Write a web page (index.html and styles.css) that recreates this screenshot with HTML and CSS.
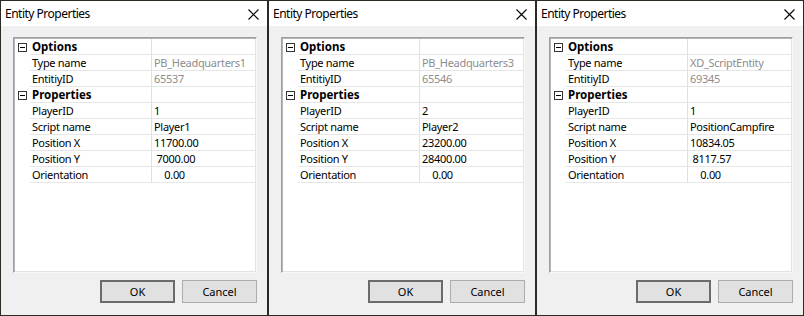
FILE: index.html
```html
<!DOCTYPE html>
<html lang="en">
<head>
    <meta charset="UTF-8">
    <title>Entity Properties</title>
    <link rel="stylesheet" href="styles.css">
</head>
<body>
    <div class="desktop">
        <div class="dialog">
            <div class="titlebar">
                <span class="title">Entity Properties</span>
                <svg class="close" width="11" height="11" viewBox="0 0 11 11"><path d="M0.5 0.5 L10.5 10.5 M10.5 0.5 L0.5 10.5" stroke="#000" stroke-width="1.1"/></svg>
            </div>
            <div class="body">
                <div class="grid">
                    <div class="row cat"><div class="gutter"><span class="minus"></span></div><div class="name">Options</div><div class="value"></div></div>
                    <div class="row"><div class="gutter"></div><div class="name">Type name</div><div class="value ro">PB_Headquarters1</div></div>
                    <div class="row"><div class="gutter"></div><div class="name">EntitiyID</div><div class="value ro">65537</div></div>
                    <div class="row cat"><div class="gutter"><span class="minus"></span></div><div class="name">Properties</div><div class="value"></div></div>
                    <div class="row"><div class="gutter"></div><div class="name">PlayerID</div><div class="value">1</div></div>
                    <div class="row"><div class="gutter"></div><div class="name">Script name</div><div class="value">Player1</div></div>
                    <div class="row"><div class="gutter"></div><div class="name">Position X</div><div class="value">11700.00</div></div>
                    <div class="row"><div class="gutter"></div><div class="name">Position Y</div><div class="value"> 7000.00</div></div>
                    <div class="row"><div class="gutter"></div><div class="name">Orientation</div><div class="value">    0.00</div></div>
                </div>
                <div class="buttons">
                    <button class="btn default">OK</button>
                    <button class="btn">Cancel</button>
                </div>
            </div>
        </div>

        <div class="dialog">
            <div class="titlebar">
                <span class="title">Entity Properties</span>
                <svg class="close" width="11" height="11" viewBox="0 0 11 11"><path d="M0.5 0.5 L10.5 10.5 M10.5 0.5 L0.5 10.5" stroke="#000" stroke-width="1.1"/></svg>
            </div>
            <div class="body">
                <div class="grid">
                    <div class="row cat"><div class="gutter"><span class="minus"></span></div><div class="name">Options</div><div class="value"></div></div>
                    <div class="row"><div class="gutter"></div><div class="name">Type name</div><div class="value ro">PB_Headquarters3</div></div>
                    <div class="row"><div class="gutter"></div><div class="name">EntitiyID</div><div class="value ro">65546</div></div>
                    <div class="row cat"><div class="gutter"><span class="minus"></span></div><div class="name">Properties</div><div class="value"></div></div>
                    <div class="row"><div class="gutter"></div><div class="name">PlayerID</div><div class="value">2</div></div>
                    <div class="row"><div class="gutter"></div><div class="name">Script name</div><div class="value">Player2</div></div>
                    <div class="row"><div class="gutter"></div><div class="name">Position X</div><div class="value">23200.00</div></div>
                    <div class="row"><div class="gutter"></div><div class="name">Position Y</div><div class="value">28400.00</div></div>
                    <div class="row"><div class="gutter"></div><div class="name">Orientation</div><div class="value">    0.00</div></div>
                </div>
                <div class="buttons">
                    <button class="btn default">OK</button>
                    <button class="btn">Cancel</button>
                </div>
            </div>
        </div>

        <div class="dialog">
            <div class="titlebar">
                <span class="title">Entity Properties</span>
                <svg class="close" width="11" height="11" viewBox="0 0 11 11"><path d="M0.5 0.5 L10.5 10.5 M10.5 0.5 L0.5 10.5" stroke="#000" stroke-width="1.1"/></svg>
            </div>
            <div class="body">
                <div class="grid">
                    <div class="row cat"><div class="gutter"><span class="minus"></span></div><div class="name">Options</div><div class="value"></div></div>
                    <div class="row"><div class="gutter"></div><div class="name">Type name</div><div class="value ro">XD_ScriptEntity</div></div>
                    <div class="row"><div class="gutter"></div><div class="name">EntitiyID</div><div class="value ro">69345</div></div>
                    <div class="row cat"><div class="gutter"><span class="minus"></span></div><div class="name">Properties</div><div class="value"></div></div>
                    <div class="row"><div class="gutter"></div><div class="name">PlayerID</div><div class="value">1</div></div>
                    <div class="row"><div class="gutter"></div><div class="name">Script name</div><div class="value">PositionCampfire</div></div>
                    <div class="row"><div class="gutter"></div><div class="name">Position X</div><div class="value">10834.05</div></div>
                    <div class="row"><div class="gutter"></div><div class="name">Position Y</div><div class="value"> 8117.57</div></div>
                    <div class="row"><div class="gutter"></div><div class="name">Orientation</div><div class="value">    0.00</div></div>
                </div>
                <div class="buttons">
                    <button class="btn default">OK</button>
                    <button class="btn">Cancel</button>
                </div>
            </div>
        </div>
    </div>
</body>
</html>
```

FILE: styles.css
```css
body { margin: 0; background: #26261c; font-family: "Noto Sans", "Open Sans", sans-serif; font-size: 11px; color: #000; }
.desktop { display: flex; width: 804px; height: 316px; }
.dialog { width: 268px; height: 316px; box-sizing: border-box; border: 1px solid #2b2a22; background: #f0f0f0; display: flex; flex-direction: column; }
.titlebar { height: 25px; background: #fff; display: flex; align-items: center; justify-content: space-between; padding: 0 8px 0 4px; }
.title { font-size: 12px; letter-spacing: -0.5px; }
.close { display: block; margin-top: 1px; }
.body { padding: 11px 0 0 12px; }
.grid { width: 244px; height: 236px; box-sizing: border-box; background: #fff; border: 1px solid; border-color: #a0a0a0 #f8f8f8 #f8f8f8 #a0a0a0; box-shadow: inset 1px 1px 0 #b4b4b4, inset -1px -1px 0 #e3e3e3; padding: 1px 1px 0 1px; }
.row { display: grid; grid-template-columns: 15px 122px 1fr; height: 16px; letter-spacing: -0.3px; }
.gutter { display: flex; align-items: center; padding-left: 3px; }
.name, .value { border-bottom: 1px solid #e6e6e6; line-height: 15px; white-space: pre; overflow: hidden; }
.name { padding-left: 2px; border-right: 1px solid #e0e0e0; }
.value { padding-left: 2px; }
.value.ro { color: #8d8d8d; }
.cat .name { font-weight: bold; font-size: 11.5px; letter-spacing: 0; }
.minus { width: 7px; height: 7px; border: 1px solid #333; position: relative; background: #fff; }
.minus::after { content: ""; position: absolute; left: 1px; top: 3px; width: 5px; height: 1px; background: #000; }
.buttons { display: flex; justify-content: flex-end; gap: 7px; margin-top: 7px; padding-right: 10px; }
.btn { width: 75px; height: 23px; box-sizing: border-box; background: #e1e1e1; border: 1px solid #adadad; font-family: inherit; font-size: 11px; color: #000; padding: 0; }
.btn.default { border: 2px solid #6b6b6b; }
```
